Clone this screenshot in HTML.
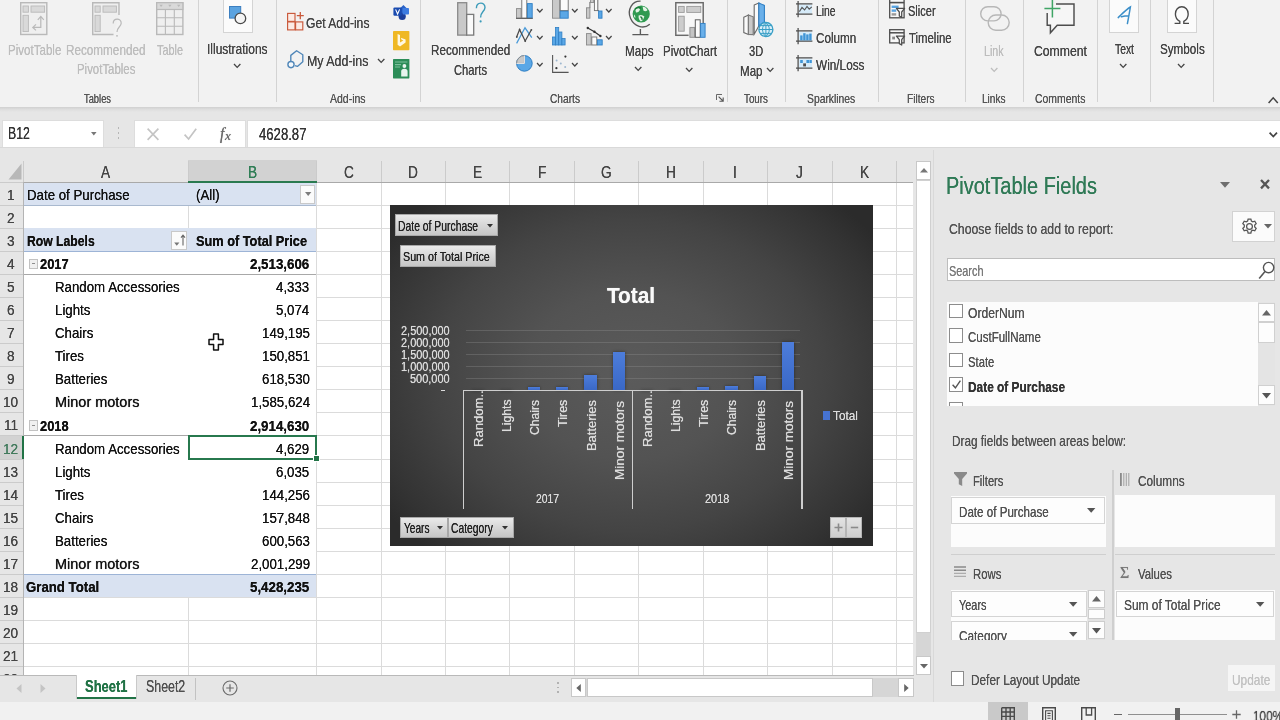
<!DOCTYPE html>
<html><head><meta charset="utf-8"><title>Excel PivotTable</title>
<style>
html,body{margin:0;padding:0;}
body{width:1280px;height:720px;overflow:hidden;position:relative;background:#e6e6e6;font-family:"Liberation Sans",sans-serif;}
#root{position:absolute;left:0;top:0;width:1280px;height:720px;overflow:hidden;will-change:transform;}
#root div,#root svg,#root span.t{position:absolute;}
span.t{white-space:nowrap;transform-origin:0 0;display:block;font-family:"Liberation Sans",sans-serif;}
span.t{text-shadow:0 0 0.7px currentColor;}
span.b{font-weight:bold;}span.i{font-style:italic;}span.s{font-family:"Liberation Serif",serif;}
svg{overflow:visible;}
</style></head><body><div id="root">
<div style="left:0.00px;top:0.00px;width:1280.00px;height:106.80px;background:#f2f2f2;"></div>
<div style="left:0.00px;top:106.80px;width:1280.00px;height:5.70px;background:linear-gradient(#d0d0d0,#dddddd 45%,#e6e6e6);"></div>
<div style="left:2.50px;top:120.60px;width:100.60px;height:26.30px;background:#fff;box-shadow:0 0 0 1px #dddddd;"></div>
<div style="left:134.60px;top:120.60px;width:110.00px;height:26.30px;background:#fff;box-shadow:0 0 0 1px #dddddd;"></div>
<div style="left:247.50px;top:120.60px;width:1033.50px;height:26.30px;background:#fff;box-shadow:0 0 0 1px #dddddd;"></div>
<div style="left:0.00px;top:147.30px;width:1280.00px;height:1.00px;background:#d9d9d9;"></div>
<div style="left:197.90px;top:0.00px;width:1.10px;height:101.70px;background:#d3d3d3;"></div>
<div style="left:275.80px;top:0.00px;width:1.10px;height:101.70px;background:#d3d3d3;"></div>
<div style="left:420.00px;top:0.00px;width:1.10px;height:101.70px;background:#d3d3d3;"></div>
<div style="left:727.00px;top:0.00px;width:1.10px;height:101.70px;background:#d3d3d3;"></div>
<div style="left:785.20px;top:0.00px;width:1.10px;height:101.70px;background:#d3d3d3;"></div>
<div style="left:877.80px;top:0.00px;width:1.10px;height:101.70px;background:#d3d3d3;"></div>
<div style="left:964.90px;top:0.00px;width:1.10px;height:101.70px;background:#d3d3d3;"></div>
<div style="left:1022.90px;top:0.00px;width:1.10px;height:101.70px;background:#d3d3d3;"></div>
<div style="left:1096.50px;top:0.00px;width:1.10px;height:101.70px;background:#d3d3d3;"></div>
<div style="left:1150.00px;top:0.00px;width:1.10px;height:101.70px;background:#d3d3d3;"></div>
<div style="left:1212.80px;top:0.00px;width:1.10px;height:101.70px;background:#d3d3d3;"></div>
<span class="t" style="left:7.60px;top:42.60px;font-size:14.2px;line-height:14.2px;color:#bdbdbd;transform:scaleX(0.8149);">PivotTable</span>
<span class="t" style="left:66.00px;top:42.60px;font-size:14.2px;line-height:14.2px;color:#bdbdbd;transform:scaleX(0.8258);">Recommended</span>
<span class="t" style="left:76.50px;top:62.10px;font-size:14.2px;line-height:14.2px;color:#bdbdbd;transform:scaleX(0.8054);">PivotTables</span>
<span class="t" style="left:157.00px;top:42.60px;font-size:14.2px;line-height:14.2px;color:#bdbdbd;transform:scaleX(0.7661);">Table</span>
<span class="t" style="left:84.00px;top:91.50px;font-size:13.6px;line-height:13.6px;color:#555;transform:scaleX(0.6870);">Tables</span>
<span class="t" style="left:206.70px;top:41.50px;font-size:14.2px;line-height:14.2px;color:#444;transform:scaleX(0.8434);">Illustrations</span>
<svg style="left:234.20px;top:64.10px;" width="6.4" height="3.4" viewBox="0 0 6.4 3.4"><path d="M0 0 L3.2 3.4 L6.4 0" fill="none" stroke="#444" stroke-width="1.3"/></svg>
<span class="t" style="left:306.00px;top:15.90px;font-size:14.2px;line-height:14.2px;color:#444;transform:scaleX(0.8559);">Get Add-ins</span>
<span class="t" style="left:306.50px;top:53.50px;font-size:14.2px;line-height:14.2px;color:#444;transform:scaleX(0.8758);">My Add-ins</span>
<svg style="left:378.40px;top:58.70px;" width="6.4" height="3.4" viewBox="0 0 6.4 3.4"><path d="M0 0 L3.2 3.4 L6.4 0" fill="none" stroke="#444" stroke-width="1.3"/></svg>
<span class="t" style="left:330.00px;top:91.50px;font-size:13.6px;line-height:13.6px;color:#555;transform:scaleX(0.7722);">Add-ins</span>
<span class="t" style="left:430.80px;top:43.10px;font-size:14.2px;line-height:14.2px;color:#444;transform:scaleX(0.8226);">Recommended</span>
<span class="t" style="left:454.00px;top:62.70px;font-size:14.2px;line-height:14.2px;color:#444;transform:scaleX(0.7891);">Charts</span>
<span class="t" style="left:625.00px;top:43.70px;font-size:14.2px;line-height:14.2px;color:#444;transform:scaleX(0.8238);">Maps</span>
<svg style="left:635.30px;top:67.30px;" width="6.4" height="3.4" viewBox="0 0 6.4 3.4"><path d="M0 0 L3.2 3.4 L6.4 0" fill="none" stroke="#444" stroke-width="1.3"/></svg>
<span class="t" style="left:663.00px;top:43.90px;font-size:14.2px;line-height:14.2px;color:#444;transform:scaleX(0.8143);">PivotChart</span>
<svg style="left:686.00px;top:67.80px;" width="6.4" height="3.4" viewBox="0 0 6.4 3.4"><path d="M0 0 L3.2 3.4 L6.4 0" fill="none" stroke="#444" stroke-width="1.3"/></svg>
<span class="t" style="left:550.00px;top:91.50px;font-size:13.6px;line-height:13.6px;color:#555;transform:scaleX(0.7490);">Charts</span>
<span class="t" style="left:749.40px;top:44.30px;font-size:14.2px;line-height:14.2px;color:#444;transform:scaleX(0.7813);">3D</span>
<span class="t" style="left:739.50px;top:63.50px;font-size:14.2px;line-height:14.2px;color:#444;transform:scaleX(0.8147);">Map</span>
<svg style="left:767.00px;top:67.90px;" width="6.4" height="3.4" viewBox="0 0 6.4 3.4"><path d="M0 0 L3.2 3.4 L6.4 0" fill="none" stroke="#444" stroke-width="1.3"/></svg>
<span class="t" style="left:744.00px;top:91.50px;font-size:13.6px;line-height:13.6px;color:#555;transform:scaleX(0.7218);">Tours</span>
<span class="t" style="left:816.00px;top:3.60px;font-size:14.2px;line-height:14.2px;color:#444;transform:scaleX(0.7303);">Line</span>
<span class="t" style="left:816.00px;top:30.60px;font-size:14.2px;line-height:14.2px;color:#444;transform:scaleX(0.8259);">Column</span>
<span class="t" style="left:815.50px;top:57.90px;font-size:14.2px;line-height:14.2px;color:#444;transform:scaleX(0.8310);">Win/Loss</span>
<span class="t" style="left:807.00px;top:91.50px;font-size:13.6px;line-height:13.6px;color:#555;transform:scaleX(0.7605);">Sparklines</span>
<span class="t" style="left:908.00px;top:3.60px;font-size:14.2px;line-height:14.2px;color:#444;transform:scaleX(0.7775);">Slicer</span>
<span class="t" style="left:909.00px;top:30.60px;font-size:14.2px;line-height:14.2px;color:#444;transform:scaleX(0.8021);">Timeline</span>
<span class="t" style="left:907.40px;top:91.50px;font-size:13.6px;line-height:13.6px;color:#555;transform:scaleX(0.7461);">Filters</span>
<span class="t" style="left:984.40px;top:44.30px;font-size:14.2px;line-height:14.2px;color:#bdbdbd;transform:scaleX(0.7502);">Link</span>
<svg style="left:990.80px;top:67.90px;" width="6.4" height="3.4" viewBox="0 0 6.4 3.4"><path d="M0 0 L3.2 3.4 L6.4 0" fill="none" stroke="#bdbdbd" stroke-width="1.3"/></svg>
<span class="t" style="left:982.00px;top:91.50px;font-size:13.6px;line-height:13.6px;color:#555;transform:scaleX(0.7432);">Links</span>
<span class="t" style="left:1034.00px;top:43.70px;font-size:14.2px;line-height:14.2px;color:#444;transform:scaleX(0.8610);">Comment</span>
<span class="t" style="left:1034.50px;top:91.50px;font-size:13.6px;line-height:13.6px;color:#555;transform:scaleX(0.7680);">Comments</span>
<span class="t" style="left:1115.00px;top:41.50px;font-size:14.2px;line-height:14.2px;color:#444;transform:scaleX(0.7292);">Text</span>
<svg style="left:1120.40px;top:64.30px;" width="6.4" height="3.4" viewBox="0 0 6.4 3.4"><path d="M0 0 L3.2 3.4 L6.4 0" fill="none" stroke="#444" stroke-width="1.3"/></svg>
<span class="t" style="left:1159.70px;top:41.50px;font-size:14.2px;line-height:14.2px;color:#444;transform:scaleX(0.8227);">Symbols</span>
<svg style="left:1177.80px;top:64.30px;" width="6.4" height="3.4" viewBox="0 0 6.4 3.4"><path d="M0 0 L3.2 3.4 L6.4 0" fill="none" stroke="#444" stroke-width="1.3"/></svg>
<svg style="left:536.80px;top:9.00px;" width="5.6" height="3.0" viewBox="0 0 5.6 3.0"><path d="M0 0 L2.8 3.0 L5.6 0" fill="none" stroke="#444" stroke-width="1.2"/></svg>
<svg style="left:536.80px;top:35.80px;" width="5.6" height="3.0" viewBox="0 0 5.6 3.0"><path d="M0 0 L2.8 3.0 L5.6 0" fill="none" stroke="#444" stroke-width="1.2"/></svg>
<svg style="left:536.80px;top:62.90px;" width="5.6" height="3.0" viewBox="0 0 5.6 3.0"><path d="M0 0 L2.8 3.0 L5.6 0" fill="none" stroke="#444" stroke-width="1.2"/></svg>
<svg style="left:571.50px;top:9.00px;" width="5.6" height="3.0" viewBox="0 0 5.6 3.0"><path d="M0 0 L2.8 3.0 L5.6 0" fill="none" stroke="#444" stroke-width="1.2"/></svg>
<svg style="left:571.50px;top:35.80px;" width="5.6" height="3.0" viewBox="0 0 5.6 3.0"><path d="M0 0 L2.8 3.0 L5.6 0" fill="none" stroke="#444" stroke-width="1.2"/></svg>
<svg style="left:571.50px;top:62.90px;" width="5.6" height="3.0" viewBox="0 0 5.6 3.0"><path d="M0 0 L2.8 3.0 L5.6 0" fill="none" stroke="#444" stroke-width="1.2"/></svg>
<svg style="left:606.40px;top:9.00px;" width="5.6" height="3.0" viewBox="0 0 5.6 3.0"><path d="M0 0 L2.8 3.0 L5.6 0" fill="none" stroke="#444" stroke-width="1.2"/></svg>
<svg style="left:606.40px;top:35.80px;" width="5.6" height="3.0" viewBox="0 0 5.6 3.0"><path d="M0 0 L2.8 3.0 L5.6 0" fill="none" stroke="#444" stroke-width="1.2"/></svg>
<svg style="left:1268.00px;top:96.50px;" width="10.4" height="6.4" viewBox="0 0 10.4 6.4"><path d="M0.6 6 L5.2 0.8 L9.8 6" fill="none" stroke="#444" stroke-width="1.5"/></svg>
<svg style="left:716.00px;top:93.60px;" width="8" height="8.4" viewBox="0 0 8 8.4"><path d="M0.5 6 V0.5 H6" fill="none" stroke="#666" stroke-width="1"/><path d="M2.6 2.6 L7 7 M7.2 3.4 V7.2 H3.4" fill="none" stroke="#555" stroke-width="1.1"/></svg>
<span class="t" style="left:7.50px;top:126.00px;font-size:15.8px;line-height:15.8px;color:#333;transform:scaleX(0.7787);">B12</span>
<svg style="left:91.40px;top:132.00px;" width="5.6" height="3.6" viewBox="0 0 5.6 3.6"><path d="M0 0 L5.6 0 L2.8 3.4 Z" fill="#777"/></svg>
<div style="left:117.50px;top:127.10px;width:1.80px;height:1.80px;background:#b6b6b6;"></div>
<div style="left:117.50px;top:132.10px;width:1.80px;height:1.80px;background:#b6b6b6;"></div>
<div style="left:117.50px;top:137.10px;width:1.80px;height:1.80px;background:#b6b6b6;"></div>
<svg style="left:147.00px;top:127.50px;" width="12" height="12.5" viewBox="0 0 12 12.5"><path d="M0.6 0.6 L11.4 11.9 M11.4 0.6 L0.6 11.9" stroke="#c4c4c4" stroke-width="1.6"/></svg>
<svg style="left:183.70px;top:128.00px;" width="13" height="12" viewBox="0 0 13 12"><path d="M0.6 6.6 L4.6 11 L12.2 0.8" fill="none" stroke="#c4c4c4" stroke-width="1.7"/></svg>
<span class="t s i" style="left:219.50px;top:125.30px;font-size:17px;line-height:17px;color:#6a6a6a;transform:scaleX(0.9084);">f</span>
<span class="t s i" style="left:225.40px;top:129.55px;font-size:12.5px;line-height:12.5px;color:#6a6a6a;transform:scaleX(1.0435);">x</span>
<span class="t" style="left:258.80px;top:126.70px;font-size:15.6px;line-height:15.6px;color:#333;transform:scaleX(0.8423);">4628.87</span>
<svg style="left:1268.50px;top:131.60px;" width="8.6" height="5.4" viewBox="0 0 8.6 5.4"><path d="M0.6 0.6 L4.3 4.6 L8 0.6" fill="none" stroke="#444" stroke-width="1.7"/></svg>
<svg style="left:20.40px;top:2.20px;" width="27.5" height="33.2" viewBox="0 0 27.5 33.2"><rect x="0.7" y="0.7" width="26.1" height="31.8" fill="#efefef" stroke="#b9b9b9" stroke-width="1.4"/>
<rect x="3" y="4" width="5.4" height="6.2" fill="#d9d9d9" stroke="#b9b9b9" stroke-width="0.9"/>
<rect x="11" y="4" width="13.6" height="6.2" fill="#d9d9d9" stroke="#b9b9b9" stroke-width="0.9"/>
<rect x="3" y="13.3" width="5.4" height="16.3" fill="#d9d9d9" stroke="#b9b9b9" stroke-width="0.9"/>
<path d="M13 25.4 H20.8 V14.6 M17.8 17.8 L20.8 14.4 L23.8 17.8 M16 22.4 L12.8 25.4 L16 28.4" fill="none" stroke="#b9b9b9" stroke-width="1.2"/></svg>
<svg style="left:92.40px;top:2.20px;" width="31" height="36" viewBox="0 0 31 36"><path d="M27 13 V0.7 H0.7 V32.5 H21.5" fill="#efefef" stroke="#b9b9b9" stroke-width="1.4"/>
<rect x="3" y="4" width="5.2" height="6.2" fill="#d9d9d9" stroke="#b9b9b9" stroke-width="0.9"/>
<rect x="11" y="4" width="13.4" height="6.2" fill="#d9d9d9" stroke="#b9b9b9" stroke-width="0.9"/>
<rect x="3" y="13.3" width="5.2" height="16.3" fill="#d9d9d9" stroke="#b9b9b9" stroke-width="0.9"/>
<path d="M21.2 21.4 C21.2 15.6 29.4 15.8 29.2 21.2 C29 25 25 25.2 25 30" fill="none" stroke="#b9b9b9" stroke-width="1.2"/><circle cx="25" cy="33.8" r="0.9" fill="#b9b9b9"/></svg>
<svg style="left:156.20px;top:2.20px;" width="27.6" height="33.2" viewBox="0 0 27.6 33.2"><rect x="0.7" y="0.7" width="26.2" height="31.8" fill="#efefef" stroke="#b9b9b9" stroke-width="1.4"/>
<rect x="0.7" y="0.7" width="26.2" height="6.8" fill="#d9d9d9" stroke="#b9b9b9" stroke-width="1.2"/>
<path d="M9.4 7.5 V32.5 M18.3 7.5 V32.5 M0.7 15.8 H26.9 M0.7 24.2 H26.9" stroke="#b9b9b9" stroke-width="1.1"/>
<path d="M3.4 2.8 H6.8 L5.1 5 Z M12.2 2.8 H15.6 L13.9 5 Z M21 2.8 H24.4 L22.7 5 Z" fill="#b9b9b9"/></svg>
<div style="left:222.70px;top:-2.00px;width:30.10px;height:35.00px;background:#fbfbfb;box-shadow:inset 0 0 0 1px #d4d4d4;"></div>
<svg style="left:229.00px;top:6.00px;" width="18" height="19" viewBox="0 0 18 19"><rect x="0.5" y="0.5" width="11.2" height="11.6" fill="#5ba3e0" stroke="#3c7fc0" stroke-width="1"/>
<circle cx="11.4" cy="12.4" r="5.3" fill="#f4f4f4" stroke="#4a4a4a" stroke-width="1.3"/></svg>
<svg style="left:287.00px;top:12.20px;" width="16.6" height="19" viewBox="0 0 16.6 19"><g fill="#fcebe5" stroke="#c9583a" stroke-width="1.15"><rect x="0.6" y="1.4" width="7.4" height="8"/><rect x="0.6" y="9.9" width="7.4" height="8"/><rect x="8.6" y="9.9" width="7.2" height="8"/></g>
<path d="M13.3 0 V7.2 M9.8 3.6 H16.8" stroke="#c9583a" stroke-width="1.3" fill="none"/></svg>
<svg style="left:287.00px;top:50.00px;" width="17" height="19" viewBox="0 0 17 19"><path d="M3.8 11.2 V5.4 L9.6 0.8 L15.8 4.8 V11.8 L10.4 16.4 L8 15.6" fill="none" stroke="#4f86b8" stroke-width="1.35" stroke-linejoin="round"/>
<circle cx="4" cy="14.6" r="3.1" fill="#f4f8fc" stroke="#4f86b8" stroke-width="1.35"/></svg>
<svg style="left:393.40px;top:3.60px;" width="16.4" height="16.8" viewBox="0 0 16.4 16.8"><path d="M10.4 1 L15.6 6 L10.4 11 L5.2 6 Z" fill="#2b63c7"/><circle cx="9.2" cy="12.4" r="3.6" fill="#1d3f9a"/><rect x="9.6" y="4" width="6.4" height="6.6" rx="0.8" fill="#3d7be0"/>
<rect x="0.4" y="3.4" width="8.4" height="8.4" rx="1.2" fill="#1a4bb0"/><path d="M2.6 5.4 L4.6 10 L6.6 5.4" fill="none" stroke="#fff" stroke-width="1.1"/></svg>
<svg style="left:393.20px;top:31.00px;" width="16.4" height="19.2" viewBox="0 0 16.4 19.2"><rect x="0" y="0" width="16.4" height="19.2" rx="0.8" fill="#efb824"/>
<path d="M4.6 3 L7 3.9 V11.4 L10.4 9.6 L8.6 8.8 L7.8 6.8 L12.6 8.6 V11.4 L7 15.4 L4.6 13.8 Z" fill="#fff8e0"/></svg>
<svg style="left:393.40px;top:59.40px;" width="16.4" height="19.4" viewBox="0 0 16.4 19.4"><rect x="0" y="0" width="16.4" height="19.4" rx="0.6" fill="#2c8d58"/>
<path d="M2 3 H14.4 M2 5.6 H8 M2 8 H7" stroke="#7cc29c" stroke-width="1.1"/>
<circle cx="11.4" cy="7" r="1.9" fill="#e8f5ee"/><path d="M8.2 17.4 V12.4 Q8.2 9.8 11.4 9.8 Q14.6 9.8 14.6 12.4 V17.4 Z" fill="#e8f5ee"/></svg>
<svg style="left:456.60px;top:2.00px;" width="29" height="34" viewBox="0 0 29 34"><rect x="0.7" y="0.7" width="9" height="32.4" fill="#c9c9c9" stroke="#8a8a8a" stroke-width="1.3"/>
<rect x="9.7" y="12.4" width="7" height="20.7" fill="#fafafa" stroke="#7a7a7a" stroke-width="1.3"/>
<path d="M19.4 6.2 C19.4 -0.6 28.2 -0.2 28 5.4 C27.8 9.6 23.6 9.8 23.6 15.4" fill="none" stroke="#3b9bb9" stroke-width="1.4"/><circle cx="23.6" cy="19.4" r="1.1" fill="#3b9bb9"/></svg>
<svg style="left:516.40px;top:0.00px;" width="17" height="19" viewBox="0 0 17 19"><rect x="0.5" y="8.6" width="4.6" height="9.6" fill="#c9c9c9" stroke="#8a8a8a" stroke-width="0.9"/>
<rect x="5.8" y="-1" width="5" height="19.2" fill="#fbfbfb" stroke="#6f6f6f" stroke-width="0.9"/>
<rect x="11.4" y="3.6" width="4.8" height="14.6" fill="#5aa7e6" stroke="#2f7fc4" stroke-width="0.9"/>
<path d="M0 18.3 H16.8" stroke="#555" stroke-width="1"/></svg>
<svg style="left:551.50px;top:0.00px;" width="17" height="19" viewBox="0 0 17 19"><rect x="0.5" y="-1" width="7.2" height="19.2" fill="#c9c9c9" stroke="#8a8a8a" stroke-width="0.9"/>
<rect x="8.2" y="-1" width="8" height="11.6" fill="#fbfbfb" stroke="#6f6f6f" stroke-width="0.9"/>
<rect x="8.2" y="11.2" width="8" height="7" fill="#5aa7e6" stroke="#2f7fc4" stroke-width="0.9"/></svg>
<svg style="left:586.30px;top:0.00px;" width="17" height="19" viewBox="0 0 17 19"><rect x="0.5" y="7.8" width="3.4" height="10.4" fill="#c9c9c9" stroke="#8a8a8a" stroke-width="0.9"/>
<path d="M3.9 7.8 V2 H8 V-1 M8 -1 H11.6 V10.6 H13" fill="none" stroke="#6f6f6f" stroke-width="1"/>
<rect x="4.4" y="-1" width="3.4" height="3.4" fill="#c9c9c9" stroke="#8a8a8a" stroke-width="0.8"/>
<rect x="8.4" y="-1" width="3.4" height="11.6" fill="#fbfbfb" stroke="#6f6f6f" stroke-width="0.9"/>
<rect x="12.6" y="11" width="3.4" height="7.2" fill="#5aa7e6" stroke="#2f7fc4" stroke-width="0.9"/></svg>
<svg style="left:516.40px;top:27.40px;" width="17" height="17" viewBox="0 0 17 17"><path d="M0.6 16.4 L9 0.8 L15.8 10.6" fill="none" stroke="#4a9ad8" stroke-width="1.25"/>
<path d="M0.6 10 L3.6 2.6 L9.2 14 L15.4 2.8" fill="none" stroke="#4a4a4a" stroke-width="1.25"/>
<g fill="#4a4a4a"><circle cx="0.8" cy="10" r="0.9"/><circle cx="3.6" cy="2.6" r="0.9"/><circle cx="9.2" cy="14" r="0.9"/><circle cx="15.4" cy="2.8" r="0.9"/></g></svg>
<svg style="left:552.00px;top:27.40px;" width="14" height="18.6" viewBox="0 0 14 18.6"><g fill="#5aa7e6" stroke="#2f7fc4" stroke-width="0.8"><rect x="0.5" y="10" width="3" height="8"/><rect x="3.5" y="0.5" width="3.2" height="17.5"/><rect x="6.7" y="5" width="3.2" height="13"/><rect x="9.9" y="11.6" width="3.2" height="6.4"/></g></svg>
<svg style="left:586.30px;top:27.40px;" width="17" height="18.6" viewBox="0 0 17 18.6"><rect x="0.5" y="6.6" width="4.6" height="11.4" fill="#c9c9c9" stroke="#8a8a8a" stroke-width="0.9"/>
<rect x="5.8" y="10" width="5" height="8" fill="#fbfbfb" stroke="#6f6f6f" stroke-width="0.9"/>
<rect x="11.4" y="12.8" width="4.8" height="5.2" fill="#5aa7e6" stroke="#2f7fc4" stroke-width="0.9"/>
<path d="M1.8 1 L8.4 4.8 L14.4 9" stroke="#333" stroke-width="1.2" fill="none"/><g fill="#333"><circle cx="1.8" cy="1" r="1.2"/><circle cx="8.4" cy="4.8" r="1.2"/><circle cx="14.4" cy="9" r="1.2"/></g></svg>
<svg style="left:516.00px;top:54.60px;" width="17" height="17" viewBox="0 0 17 17"><circle cx="8.4" cy="8.4" r="7.8" fill="#5aa7e6" stroke="#2f7fc4" stroke-width="1"/>
<path d="M8.4 8.4 V0.6 A7.8 7.8 0 0 0 0.6 8.4 Z" fill="#c9c9c9" stroke="#8a8a8a" stroke-width="0.9"/>
<path d="M8.4 0.6 V8.4 H0.6" fill="none" stroke="#f4f4f4" stroke-width="0.9"/></svg>
<svg style="left:551.50px;top:54.80px;" width="17" height="18.4" viewBox="0 0 17 18.4"><path d="M0.6 0 V17.4 H16.6" fill="none" stroke="#555" stroke-width="1.1"/>
<g fill="#333"><circle cx="13.4" cy="1.6" r="1.1"/><circle cx="4.4" cy="13.2" r="1.1"/></g>
<g fill="#9db7cf"><circle cx="4.6" cy="5.4" r="1"/><circle cx="8.8" cy="8.4" r="1"/><circle cx="13.2" cy="12" r="1"/></g></svg>
<svg style="left:626.00px;top:0.00px;" width="26" height="36" viewBox="0 0 26 36"><circle cx="15.2" cy="14" r="8.6" fill="#2f9a50"/>
<path d="M10.6 8.6 Q13 7 14 9.4 Q13 12.6 10 12.4 Q8.6 10.4 10.6 8.6 Z M16.6 6.6 Q20 7 21.6 10 Q19.6 12.4 17.4 10.6 Z M12.6 15.4 Q16 14 18.4 16.4 Q17.6 20 15 21.4 Q12.2 19.4 12.6 15.4 Z M8 14.6 Q9.6 15.6 9.4 18 Q7.6 17 8 14.6 Z" fill="#e4f4e6"/>
<path d="M9 9 Q12 6.4 15 8.2 M14.4 16.6 Q16.4 17.4 16 19.8" fill="none" stroke="#1d7a3a" stroke-width="1.4"/>
<path d="M14.6 1.2 C6.4 0.8 0.6 9.4 4.6 18.6 C8 26.2 17.4 29.8 23.8 24.2" fill="none" stroke="#5a5a5a" stroke-width="1.35"/>
<path d="M14.4 29 V34.6 M6.4 34.6 H22.4" stroke="#5a5a5a" stroke-width="1.35"/></svg>
<svg style="left:675.40px;top:2.00px;" width="31" height="36" viewBox="0 0 31 36"><rect x="0.8" y="0.7" width="27.4" height="32.6" fill="#f7f7f7" stroke="#6a6a6a" stroke-width="1.45"/>
<rect x="3.6" y="4.4" width="5.6" height="6" fill="#cdcdcd" stroke="#9a9a9a" stroke-width="0.9"/>
<rect x="11.8" y="4.4" width="14" height="6" fill="#cdcdcd" stroke="#9a9a9a" stroke-width="0.9"/>
<rect x="3.6" y="14.2" width="5.6" height="15" fill="#cdcdcd" stroke="#9a9a9a" stroke-width="0.9"/>
<rect x="13.6" y="24" width="7" height="12" fill="#f1f1f1"/>
<rect x="14.9" y="25.6" width="4.8" height="9.7" fill="#c4c4c4" stroke="#8a8a8a" stroke-width="0.9"/>
<rect x="20.3" y="17.8" width="4.9" height="17.5" fill="#fbfbfb" stroke="#5e5e5e" stroke-width="1"/>
<rect x="25.6" y="21.4" width="4.5" height="13.9" fill="#6ab0ea" stroke="#2f7fc4" stroke-width="0.9"/></svg>
<svg style="left:742.60px;top:2.00px;" width="31" height="36" viewBox="0 0 31 36"><path d="M0.8 15.2 L5.4 13 V32.4 L0.8 30.6 Z" fill="#fafafa" stroke="#6a6a6a" stroke-width="1.1"/>
<path d="M5.4 13 L10.2 14.8 V32.6 L5.4 32.4 Z" fill="#c9c9c9" stroke="#7a7a7a" stroke-width="1.1"/>
<path d="M11.2 3 L15.8 1 V24 L11.2 32.2 Z" fill="#fafafa" stroke="#6a6a6a" stroke-width="1.1"/>
<path d="M15.8 1 L21.4 3.4 V20 L15.8 24 Z" fill="#6ab0ea" stroke="#2f7fc4" stroke-width="1.1"/>
<circle cx="22.9" cy="27.5" r="7" fill="#d9eef8" stroke="#3a9fc6" stroke-width="1.3"/>
<path d="M15.9 27.5 H29.9 M17 23.6 H28.8 M17 31.4 H28.8 M22.9 20.5 V34.5 M22.9 20.5 C18.4 24 18.4 31 22.9 34.5 M22.9 20.5 C27.4 24 27.4 31 22.9 34.5" fill="none" stroke="#3a9fc6" stroke-width="1"/></svg>
<svg style="left:796.40px;top:1.20px;" width="17" height="17" viewBox="0 0 17 17"><rect x="3" y="3.6" width="13" height="9" fill="#d6ebf9"/>
<path d="M0 2.9 H16.4 M0 13.2 H16.4 M2.1 0 V16.2" stroke="#4d4d4d" stroke-width="1.25" fill="none"/><path d="M3.4 10.6 L6 6.4 L8.6 9 L11 5.4 L13.2 8.2 L15.8 5.8" fill="none" stroke="#555" stroke-width="1.1"/></svg>
<svg style="left:796.40px;top:28.40px;" width="17" height="17" viewBox="0 0 17 17"><rect x="3" y="3.6" width="13" height="9" fill="#d6ebf9"/>
<path d="M0 2.9 H16.4 M0 13.2 H16.4 M2.1 0 V16.2" stroke="#4d4d4d" stroke-width="1.25" fill="none"/><g fill="#3f95d6"><rect x="4.2" y="7.4" width="2.4" height="5"/><rect x="7.2" y="5.2" width="2.4" height="7.2"/><rect x="10.2" y="6.4" width="2.4" height="6"/><rect x="13.2" y="5.6" width="2.4" height="6.8"/></g></svg>
<svg style="left:796.40px;top:55.40px;" width="17" height="17" viewBox="0 0 17 17"><rect x="3" y="3.6" width="13" height="9" fill="#d6ebf9"/>
<path d="M0 2.9 H16.4 M0 13.2 H16.4 M2.1 0 V16.2" stroke="#4d4d4d" stroke-width="1.25" fill="none"/><g fill="#3f95d6"><rect x="4.2" y="5" width="2.6" height="3"/><rect x="10.4" y="5" width="2.6" height="3"/><rect x="13.4" y="5" width="2.4" height="3"/></g><g fill="#4d4d4d"><rect x="7.2" y="8.4" width="2.8" height="3"/></g></svg>
<svg style="left:889.20px;top:-1.00px;" width="16" height="20" viewBox="0 0 16 20"><rect x="0.7" y="0" width="14.4" height="18.8" fill="#f8f8f8" stroke="#4d4d4d" stroke-width="1.3"/>
<path d="M0.7 3.6 H15.1" stroke="#4d4d4d" stroke-width="1.6"/>
<rect x="2.6" y="6.6" width="7" height="2.4" fill="#58a4e2"/><rect x="2.6" y="10.4" width="4.6" height="2.4" fill="#58a4e2"/><rect x="2.6" y="14.2" width="4.6" height="2.4" fill="#9a9a9a"/>
<path d="M7.4 9.4 H15.6 L12.7 13 V18.4 L10.3 17 V13 Z" fill="#f8f8f8" stroke="#4d4d4d" stroke-width="1.25" stroke-linejoin="round"/></svg>
<svg style="left:889.20px;top:29.40px;" width="16" height="17" viewBox="0 0 16 17"><rect x="0.7" y="0.7" width="14.4" height="13.2" fill="#f8f8f8" stroke="#4d4d4d" stroke-width="1.3"/>
<path d="M0.7 3.8 H15.1" stroke="#4d4d4d" stroke-width="1.5"/>
<rect x="3.2" y="7.6" width="2.8" height="2.8" fill="#8a8a8a"/>
<path d="M7.4 7 H15.6 L12.7 10.6 V16 L10.3 14.6 V10.6 Z" fill="#f8f8f8" stroke="#4d4d4d" stroke-width="1.25" stroke-linejoin="round"/></svg>
<svg style="left:980.00px;top:6.40px;" width="30" height="25" viewBox="0 0 30 25"><rect x="0.7" y="0.7" width="20.4" height="14.2" rx="7.1" fill="none" stroke="#b7b7b7" stroke-width="1.4"/>
<rect x="8.2" y="9" width="21" height="15.2" rx="7.6" fill="none" stroke="#b7b7b7" stroke-width="1.4"/></svg>
<svg style="left:1043.60px;top:0.00px;" width="32" height="34.5" viewBox="0 0 32 34.5"><path d="M12 4 H30 V25.2 H13.2 L6.4 32.8 V25.2 H3.2 V13" fill="#f6f6f6" stroke="#4d4d4d" stroke-width="1.45" stroke-linejoin="miter"/>
<path d="M8.4 -1 V17.6 M0.4 8.4 H16.4" stroke="#3fa565" stroke-width="1.5" fill="none"/></svg>
<div style="left:1109.20px;top:-2.00px;width:30.10px;height:35.40px;background:#fbfbfb;box-shadow:inset 0 0 0 1px #d4d4d4;"></div>
<svg style="left:1117.00px;top:6.00px;" width="16" height="19" viewBox="0 0 16 19"><path d="M1.2 11.6 C4.6 8.4 9 3.6 13.4 1 C12.6 6 11.4 12 10.4 17.6 M4.4 10.8 C7 10 9.6 9.8 12 9.8" fill="none" stroke="#3c8fc9" stroke-width="1.5" stroke-linecap="round"/></svg>
<div style="left:1167.20px;top:-2.00px;width:30.00px;height:35.40px;background:#fbfbfb;box-shadow:inset 0 0 0 1px #d4d4d4;"></div>
<svg style="left:1174.20px;top:6.40px;" width="16" height="18.4" viewBox="0 0 16 18.4"><path d="M0.6 17.4 H5.8 V15.4 C2.6 13.6 1.4 10.8 1.4 8 C1.4 3.6 4.2 0.8 7.8 0.8 C11.4 0.8 14.2 3.6 14.2 8 C14.2 10.8 13 13.6 9.8 15.4 V17.4 H15" fill="none" stroke="#4a4a4a" stroke-width="1.35"/></svg>
<div style="left:23.40px;top:182.30px;width:890.10px;height:492.70px;background:#fff;"></div>
<div style="left:23.40px;top:204.86px;width:890.10px;height:1.00px;background:#dbdbdb;"></div>
<div style="left:23.40px;top:227.92px;width:890.10px;height:1.00px;background:#dbdbdb;"></div>
<div style="left:23.40px;top:250.98px;width:890.10px;height:1.00px;background:#dbdbdb;"></div>
<div style="left:23.40px;top:274.04px;width:890.10px;height:1.00px;background:#dbdbdb;"></div>
<div style="left:23.40px;top:297.10px;width:890.10px;height:1.00px;background:#dbdbdb;"></div>
<div style="left:23.40px;top:320.16px;width:890.10px;height:1.00px;background:#dbdbdb;"></div>
<div style="left:23.40px;top:343.22px;width:890.10px;height:1.00px;background:#dbdbdb;"></div>
<div style="left:23.40px;top:366.28px;width:890.10px;height:1.00px;background:#dbdbdb;"></div>
<div style="left:23.40px;top:389.34px;width:890.10px;height:1.00px;background:#dbdbdb;"></div>
<div style="left:23.40px;top:412.40px;width:890.10px;height:1.00px;background:#dbdbdb;"></div>
<div style="left:23.40px;top:435.46px;width:890.10px;height:1.00px;background:#dbdbdb;"></div>
<div style="left:23.40px;top:458.52px;width:890.10px;height:1.00px;background:#dbdbdb;"></div>
<div style="left:23.40px;top:481.58px;width:890.10px;height:1.00px;background:#dbdbdb;"></div>
<div style="left:23.40px;top:504.64px;width:890.10px;height:1.00px;background:#dbdbdb;"></div>
<div style="left:23.40px;top:527.70px;width:890.10px;height:1.00px;background:#dbdbdb;"></div>
<div style="left:23.40px;top:550.76px;width:890.10px;height:1.00px;background:#dbdbdb;"></div>
<div style="left:23.40px;top:573.82px;width:890.10px;height:1.00px;background:#dbdbdb;"></div>
<div style="left:23.40px;top:596.88px;width:890.10px;height:1.00px;background:#dbdbdb;"></div>
<div style="left:23.40px;top:619.94px;width:890.10px;height:1.00px;background:#dbdbdb;"></div>
<div style="left:23.40px;top:643.00px;width:890.10px;height:1.00px;background:#dbdbdb;"></div>
<div style="left:23.40px;top:666.06px;width:890.10px;height:1.00px;background:#dbdbdb;"></div>
<div style="left:187.80px;top:182.30px;width:1.00px;height:492.70px;background:#dbdbdb;"></div>
<div style="left:316.20px;top:182.30px;width:1.00px;height:492.70px;background:#dbdbdb;"></div>
<div style="left:380.60px;top:182.30px;width:1.00px;height:492.70px;background:#dbdbdb;"></div>
<div style="left:445.00px;top:182.30px;width:1.00px;height:492.70px;background:#dbdbdb;"></div>
<div style="left:509.40px;top:182.30px;width:1.00px;height:492.70px;background:#dbdbdb;"></div>
<div style="left:573.80px;top:182.30px;width:1.00px;height:492.70px;background:#dbdbdb;"></div>
<div style="left:638.20px;top:182.30px;width:1.00px;height:492.70px;background:#dbdbdb;"></div>
<div style="left:702.70px;top:182.30px;width:1.00px;height:492.70px;background:#dbdbdb;"></div>
<div style="left:767.20px;top:182.30px;width:1.00px;height:492.70px;background:#dbdbdb;"></div>
<div style="left:831.80px;top:182.30px;width:1.00px;height:492.70px;background:#dbdbdb;"></div>
<div style="left:895.90px;top:182.30px;width:1.00px;height:492.70px;background:#dbdbdb;"></div>
<div style="left:23.90px;top:228.42px;width:292.30px;height:368.46px;background:#fff;"></div>
<div style="left:23.90px;top:182.80px;width:292.30px;height:22.06px;background:#d9e2f1;"></div>
<div style="left:23.90px;top:228.42px;width:292.30px;height:22.56px;background:#d9e2f1;"></div>
<div style="left:23.90px;top:574.32px;width:292.30px;height:22.56px;background:#d9e2f1;"></div>
<div style="left:23.90px;top:182.10px;width:292.30px;height:1.00px;background:#a9b9cf;"></div>
<div style="left:23.90px;top:204.76px;width:292.30px;height:1.00px;background:#a9b9cf;"></div>
<div style="left:23.90px;top:250.78px;width:292.30px;height:1.20px;background:#9db4d6;"></div>
<div style="left:23.90px;top:273.84px;width:292.30px;height:1.20px;background:#a8a8a8;"></div>
<div style="left:23.90px;top:435.26px;width:292.30px;height:1.20px;background:#a8a8a8;"></div>
<div style="left:23.90px;top:573.62px;width:292.30px;height:1.20px;background:#9db4d6;"></div>
<div style="left:188.30px;top:160.00px;width:128.40px;height:22.50px;background:#d2d2d2;"></div>
<div style="left:188.30px;top:180.50px;width:128.40px;height:2.00px;background:#2a7a50;"></div>
<div style="left:22.90px;top:160.50px;width:1.00px;height:21.50px;background:#cbcbcb;"></div>
<div style="left:187.80px;top:160.50px;width:1.00px;height:21.50px;background:#cbcbcb;"></div>
<div style="left:316.20px;top:160.50px;width:1.00px;height:21.50px;background:#cbcbcb;"></div>
<div style="left:380.60px;top:160.50px;width:1.00px;height:21.50px;background:#cbcbcb;"></div>
<div style="left:445.00px;top:160.50px;width:1.00px;height:21.50px;background:#cbcbcb;"></div>
<div style="left:509.40px;top:160.50px;width:1.00px;height:21.50px;background:#cbcbcb;"></div>
<div style="left:573.80px;top:160.50px;width:1.00px;height:21.50px;background:#cbcbcb;"></div>
<div style="left:638.20px;top:160.50px;width:1.00px;height:21.50px;background:#cbcbcb;"></div>
<div style="left:702.70px;top:160.50px;width:1.00px;height:21.50px;background:#cbcbcb;"></div>
<div style="left:767.20px;top:160.50px;width:1.00px;height:21.50px;background:#cbcbcb;"></div>
<div style="left:831.80px;top:160.50px;width:1.00px;height:21.50px;background:#cbcbcb;"></div>
<div style="left:895.90px;top:160.50px;width:1.00px;height:21.50px;background:#cbcbcb;"></div>
<div style="left:23.40px;top:181.60px;width:890.10px;height:1.00px;background:#a9a9a9;"></div>
<div style="left:188.30px;top:180.50px;width:128.40px;height:2.00px;background:#2a7a50;"></div>
<svg style="left:8.00px;top:163.00px;" width="14" height="17" viewBox="0 0 14 17"><path d="M13.5 0.5 L13.5 16.5 L0.5 16.5 Z" fill="#b8b8b8"/></svg>
<div style="left:0.00px;top:435.96px;width:23.40px;height:23.06px;background:#d2d2d2;"></div>
<div style="left:0.00px;top:181.80px;width:23.40px;height:1.00px;background:#cbcbcb;"></div>
<div style="left:0.00px;top:204.86px;width:23.40px;height:1.00px;background:#cbcbcb;"></div>
<div style="left:0.00px;top:227.92px;width:23.40px;height:1.00px;background:#cbcbcb;"></div>
<div style="left:0.00px;top:250.98px;width:23.40px;height:1.00px;background:#cbcbcb;"></div>
<div style="left:0.00px;top:274.04px;width:23.40px;height:1.00px;background:#cbcbcb;"></div>
<div style="left:0.00px;top:297.10px;width:23.40px;height:1.00px;background:#cbcbcb;"></div>
<div style="left:0.00px;top:320.16px;width:23.40px;height:1.00px;background:#cbcbcb;"></div>
<div style="left:0.00px;top:343.22px;width:23.40px;height:1.00px;background:#cbcbcb;"></div>
<div style="left:0.00px;top:366.28px;width:23.40px;height:1.00px;background:#cbcbcb;"></div>
<div style="left:0.00px;top:389.34px;width:23.40px;height:1.00px;background:#cbcbcb;"></div>
<div style="left:0.00px;top:412.40px;width:23.40px;height:1.00px;background:#cbcbcb;"></div>
<div style="left:0.00px;top:435.46px;width:23.40px;height:1.00px;background:#cbcbcb;"></div>
<div style="left:0.00px;top:458.52px;width:23.40px;height:1.00px;background:#cbcbcb;"></div>
<div style="left:0.00px;top:481.58px;width:23.40px;height:1.00px;background:#cbcbcb;"></div>
<div style="left:0.00px;top:504.64px;width:23.40px;height:1.00px;background:#cbcbcb;"></div>
<div style="left:0.00px;top:527.70px;width:23.40px;height:1.00px;background:#cbcbcb;"></div>
<div style="left:0.00px;top:550.76px;width:23.40px;height:1.00px;background:#cbcbcb;"></div>
<div style="left:0.00px;top:573.82px;width:23.40px;height:1.00px;background:#cbcbcb;"></div>
<div style="left:0.00px;top:596.88px;width:23.40px;height:1.00px;background:#cbcbcb;"></div>
<div style="left:0.00px;top:619.94px;width:23.40px;height:1.00px;background:#cbcbcb;"></div>
<div style="left:0.00px;top:643.00px;width:23.40px;height:1.00px;background:#cbcbcb;"></div>
<div style="left:0.00px;top:666.06px;width:23.40px;height:1.00px;background:#cbcbcb;"></div>
<div style="left:22.90px;top:182.30px;width:1.00px;height:492.70px;background:#b4b4b4;"></div>
<div style="left:21.60px;top:435.96px;width:2.30px;height:23.06px;background:#217346;"></div>
<span class="t" style="left:101.41px;top:164.05px;font-size:16.5px;line-height:16.5px;color:#444;transform:scaleX(0.8300);">A</span>
<span class="t" style="left:247.85px;top:164.05px;font-size:16.5px;line-height:16.5px;color:#2f7d55;transform:scaleX(0.8300);">B</span>
<span class="t" style="left:344.07px;top:164.05px;font-size:16.5px;line-height:16.5px;color:#444;transform:scaleX(0.8300);">C</span>
<span class="t" style="left:408.37px;top:164.05px;font-size:16.5px;line-height:16.5px;color:#444;transform:scaleX(0.8300);">D</span>
<span class="t" style="left:473.15px;top:164.05px;font-size:16.5px;line-height:16.5px;color:#444;transform:scaleX(0.8300);">E</span>
<span class="t" style="left:537.92px;top:164.05px;font-size:16.5px;line-height:16.5px;color:#444;transform:scaleX(0.8300);">F</span>
<span class="t" style="left:601.16px;top:164.05px;font-size:16.5px;line-height:16.5px;color:#444;transform:scaleX(0.8300);">G</span>
<span class="t" style="left:666.07px;top:164.05px;font-size:16.5px;line-height:16.5px;color:#444;transform:scaleX(0.8300);">H</span>
<span class="t" style="left:733.48px;top:164.05px;font-size:16.5px;line-height:16.5px;color:#444;transform:scaleX(0.8300);">I</span>
<span class="t" style="left:796.38px;top:164.05px;font-size:16.5px;line-height:16.5px;color:#444;transform:scaleX(0.8300);">J</span>
<span class="t" style="left:859.85px;top:164.05px;font-size:16.5px;line-height:16.5px;color:#444;transform:scaleX(0.8300);">K</span>
<span class="t" style="left:7.01px;top:186.85px;font-size:15.5px;line-height:15.5px;color:#444;transform:scaleX(0.8800);">1</span>
<span class="t" style="left:7.01px;top:209.91px;font-size:15.5px;line-height:15.5px;color:#444;transform:scaleX(0.8800);">2</span>
<span class="t" style="left:7.01px;top:232.97px;font-size:15.5px;line-height:15.5px;color:#444;transform:scaleX(0.8800);">3</span>
<span class="t" style="left:7.01px;top:256.03px;font-size:15.5px;line-height:15.5px;color:#444;transform:scaleX(0.8800);">4</span>
<span class="t" style="left:7.01px;top:279.09px;font-size:15.5px;line-height:15.5px;color:#444;transform:scaleX(0.8800);">5</span>
<span class="t" style="left:7.01px;top:302.15px;font-size:15.5px;line-height:15.5px;color:#444;transform:scaleX(0.8800);">6</span>
<span class="t" style="left:7.01px;top:325.21px;font-size:15.5px;line-height:15.5px;color:#444;transform:scaleX(0.8800);">7</span>
<span class="t" style="left:7.01px;top:348.27px;font-size:15.5px;line-height:15.5px;color:#444;transform:scaleX(0.8800);">8</span>
<span class="t" style="left:7.01px;top:371.33px;font-size:15.5px;line-height:15.5px;color:#444;transform:scaleX(0.8800);">9</span>
<span class="t" style="left:3.23px;top:394.39px;font-size:15.5px;line-height:15.5px;color:#444;transform:scaleX(0.8800);">10</span>
<span class="t" style="left:3.71px;top:417.45px;font-size:15.5px;line-height:15.5px;color:#444;transform:scaleX(0.8800);">11</span>
<span class="t" style="left:3.23px;top:440.51px;font-size:15.5px;line-height:15.5px;color:#417a5c;transform:scaleX(0.8800);">12</span>
<span class="t" style="left:3.23px;top:463.57px;font-size:15.5px;line-height:15.5px;color:#444;transform:scaleX(0.8800);">13</span>
<span class="t" style="left:3.23px;top:486.63px;font-size:15.5px;line-height:15.5px;color:#444;transform:scaleX(0.8800);">14</span>
<span class="t" style="left:3.23px;top:509.69px;font-size:15.5px;line-height:15.5px;color:#444;transform:scaleX(0.8800);">15</span>
<span class="t" style="left:3.23px;top:532.75px;font-size:15.5px;line-height:15.5px;color:#444;transform:scaleX(0.8800);">16</span>
<span class="t" style="left:3.23px;top:555.81px;font-size:15.5px;line-height:15.5px;color:#444;transform:scaleX(0.8800);">17</span>
<span class="t" style="left:3.23px;top:578.87px;font-size:15.5px;line-height:15.5px;color:#444;transform:scaleX(0.8800);">18</span>
<span class="t" style="left:3.23px;top:601.93px;font-size:15.5px;line-height:15.5px;color:#444;transform:scaleX(0.8800);">19</span>
<span class="t" style="left:3.23px;top:624.99px;font-size:15.5px;line-height:15.5px;color:#444;transform:scaleX(0.8800);">20</span>
<span class="t" style="left:3.23px;top:648.05px;font-size:15.5px;line-height:15.5px;color:#444;transform:scaleX(0.8800);">21</span>
<span class="t" style="left:3.23px;top:671.11px;font-size:15.5px;line-height:15.5px;color:#444;transform:scaleX(0.8800);">22</span>
<span class="t" style="left:26.50px;top:186.90px;font-size:15px;line-height:15px;color:#111;transform:scaleX(0.8850);">Date of Purchase</span>
<span class="t" style="left:196.00px;top:186.90px;font-size:15px;line-height:15px;color:#111;transform:scaleX(0.8850);">(All)</span>
<span class="t b" style="left:26.50px;top:233.02px;font-size:15px;line-height:15px;color:#111;transform:scaleX(0.8125);">Row Labels</span>
<span class="t b" style="left:195.60px;top:233.02px;font-size:15px;line-height:15px;color:#111;transform:scaleX(0.8501);">Sum of Total Price</span>
<span class="t b" style="left:39.90px;top:256.08px;font-size:15px;line-height:15px;color:#111;transform:scaleX(0.8599);">2017</span>
<span class="t b" style="left:250.30px;top:256.08px;font-size:15px;line-height:15px;color:#111;transform:scaleX(0.8884);">2,513,606</span>
<span class="t" style="left:55.00px;top:279.14px;font-size:15px;line-height:15px;color:#111;transform:scaleX(0.8850);">Random Accessories</span>
<span class="t" style="left:276.35px;top:279.14px;font-size:15px;line-height:15px;color:#111;transform:scaleX(0.8850);">4,333</span>
<span class="t" style="left:55.00px;top:302.20px;font-size:15px;line-height:15px;color:#111;transform:scaleX(0.8850);">Lights</span>
<span class="t" style="left:276.35px;top:302.20px;font-size:15px;line-height:15px;color:#111;transform:scaleX(0.8850);">5,074</span>
<span class="t" style="left:55.00px;top:325.26px;font-size:15px;line-height:15px;color:#111;transform:scaleX(0.8850);">Chairs</span>
<span class="t" style="left:261.61px;top:325.26px;font-size:15px;line-height:15px;color:#111;transform:scaleX(0.8850);">149,195</span>
<span class="t" style="left:55.00px;top:348.32px;font-size:15px;line-height:15px;color:#111;transform:scaleX(0.8850);">Tires</span>
<span class="t" style="left:261.61px;top:348.32px;font-size:15px;line-height:15px;color:#111;transform:scaleX(0.8850);">150,851</span>
<span class="t" style="left:55.00px;top:371.38px;font-size:15px;line-height:15px;color:#111;transform:scaleX(0.8850);">Batteries</span>
<span class="t" style="left:261.61px;top:371.38px;font-size:15px;line-height:15px;color:#111;transform:scaleX(0.8850);">618,530</span>
<span class="t" style="left:54.80px;top:394.44px;font-size:15px;line-height:15px;color:#111;transform:scaleX(0.9654);">Minor motors</span>
<span class="t" style="left:250.53px;top:394.44px;font-size:15px;line-height:15px;color:#111;transform:scaleX(0.8850);">1,585,624</span>
<span class="t b" style="left:39.90px;top:417.50px;font-size:15px;line-height:15px;color:#111;transform:scaleX(0.8599);">2018</span>
<span class="t b" style="left:250.30px;top:417.50px;font-size:15px;line-height:15px;color:#111;transform:scaleX(0.8884);">2,914,630</span>
<span class="t" style="left:55.00px;top:440.56px;font-size:15px;line-height:15px;color:#111;transform:scaleX(0.8850);">Random Accessories</span>
<span class="t" style="left:276.35px;top:440.56px;font-size:15px;line-height:15px;color:#111;transform:scaleX(0.8850);">4,629</span>
<span class="t" style="left:55.00px;top:463.62px;font-size:15px;line-height:15px;color:#111;transform:scaleX(0.8850);">Lights</span>
<span class="t" style="left:276.35px;top:463.62px;font-size:15px;line-height:15px;color:#111;transform:scaleX(0.8850);">6,035</span>
<span class="t" style="left:55.00px;top:486.68px;font-size:15px;line-height:15px;color:#111;transform:scaleX(0.8850);">Tires</span>
<span class="t" style="left:261.61px;top:486.68px;font-size:15px;line-height:15px;color:#111;transform:scaleX(0.8850);">144,256</span>
<span class="t" style="left:55.00px;top:509.74px;font-size:15px;line-height:15px;color:#111;transform:scaleX(0.8850);">Chairs</span>
<span class="t" style="left:261.61px;top:509.74px;font-size:15px;line-height:15px;color:#111;transform:scaleX(0.8850);">157,848</span>
<span class="t" style="left:55.00px;top:532.80px;font-size:15px;line-height:15px;color:#111;transform:scaleX(0.8850);">Batteries</span>
<span class="t" style="left:261.61px;top:532.80px;font-size:15px;line-height:15px;color:#111;transform:scaleX(0.8850);">600,563</span>
<span class="t" style="left:54.80px;top:555.86px;font-size:15px;line-height:15px;color:#111;transform:scaleX(0.9654);">Minor motors</span>
<span class="t" style="left:250.53px;top:555.86px;font-size:15px;line-height:15px;color:#111;transform:scaleX(0.8850);">2,001,299</span>
<span class="t b" style="left:26.00px;top:578.92px;font-size:15px;line-height:15px;color:#111;transform:scaleX(0.8817);">Grand Total</span>
<span class="t b" style="left:250.30px;top:578.92px;font-size:15px;line-height:15px;color:#111;transform:scaleX(0.8884);">5,428,235</span>
<div style="left:29.40px;top:258.68px;width:8.20px;height:10.60px;background:#f0f0f0;box-shadow:inset 0 0 0 1px #c2c2c2;"></div>
<div style="left:31.60px;top:263.48px;width:3.80px;height:1.00px;background:#8e8e8e;"></div>
<div style="left:29.40px;top:420.10px;width:8.20px;height:10.60px;background:#f0f0f0;box-shadow:inset 0 0 0 1px #c2c2c2;"></div>
<div style="left:31.60px;top:424.90px;width:3.80px;height:1.00px;background:#8e8e8e;"></div>
<div style="left:299.50px;top:184.70px;width:15.70px;height:19.50px;background:#fbfbfb;box-shadow:inset 0 0 0 1px #c9c9c9;"></div>
<svg style="left:304.60px;top:192.20px;" width="6.4" height="4.2" viewBox="0 0 6.4 4.2"><path d="M0 0 L6.4 0 L3.2 4 Z" fill="#7d7d7d"/></svg>
<div style="left:171.40px;top:230.80px;width:16.10px;height:18.80px;background:#fbfbfb;box-shadow:inset 0 0 0 1px #c9c9c9;"></div>
<svg style="left:173.00px;top:233.00px;" width="14" height="15" viewBox="0 0 14 15"><path d="M1.2 9.6 L6.4 9.6 L3.8 12.8 Z" fill="#777"/><path d="M10 12.6 L10 2.4 M8 4.6 L10 2.2 L12 4.6" stroke="#666" stroke-width="1.1" fill="none"/></svg>
<div style="left:187.60px;top:435.26px;width:129.60px;height:24.26px;box-shadow:inset 0 0 0 2px #27784e;"></div>
<div style="left:314.20px;top:456.22px;width:4.40px;height:4.40px;background:#217346;box-shadow:0 0 0 1px #fff;"></div>
<svg style="left:208.40px;top:333.00px;" width="16" height="18" viewBox="0 0 16 18"><path d="M5.6 1 H10.4 V6.4 H15 V11.4 H10.4 V17 H5.6 V11.4 H1 V6.4 H5.6 Z" fill="#fff" stroke="#111" stroke-width="1.5" stroke-linejoin="round"/></svg>
<div style="left:389.50px;top:204.80px;width:483.20px;height:341.70px;background:radial-gradient(ellipse 62% 70% at 50% 50%,#5b5b5b 0%,#535353 35%,#444444 65%,#333333 90%,#2b2b2b 100%);"></div>
<div style="left:466.00px;top:329.70px;width:334.00px;height:1.60px;background:rgba(150,150,150,0.32);"></div>
<div style="left:466.00px;top:341.65px;width:334.00px;height:1.60px;background:rgba(150,150,150,0.32);"></div>
<div style="left:466.00px;top:353.60px;width:334.00px;height:1.60px;background:rgba(150,150,150,0.32);"></div>
<div style="left:466.00px;top:365.55px;width:334.00px;height:1.60px;background:rgba(150,150,150,0.32);"></div>
<div style="left:466.00px;top:377.50px;width:334.00px;height:1.60px;background:rgba(150,150,150,0.32);"></div>
<div style="left:471.77px;top:390.10px;width:12.20px;height:0.10px;background:linear-gradient(#4d7ddb,#3a68c6);box-shadow:0 0 3px rgba(0,0,0,0.45);"></div>
<div style="left:499.93px;top:390.08px;width:12.20px;height:0.12px;background:linear-gradient(#4d7ddb,#3a68c6);box-shadow:0 0 3px rgba(0,0,0,0.45);"></div>
<div style="left:528.08px;top:386.63px;width:12.20px;height:3.57px;background:linear-gradient(#4d7ddb,#3a68c6);box-shadow:0 0 3px rgba(0,0,0,0.45);"></div>
<div style="left:556.23px;top:386.59px;width:12.20px;height:3.61px;background:linear-gradient(#4d7ddb,#3a68c6);box-shadow:0 0 3px rgba(0,0,0,0.45);"></div>
<div style="left:584.38px;top:375.42px;width:12.20px;height:14.78px;background:linear-gradient(#4d7ddb,#3a68c6);box-shadow:0 0 3px rgba(0,0,0,0.45);"></div>
<div style="left:612.52px;top:352.30px;width:12.20px;height:37.90px;background:linear-gradient(#4d7ddb,#3a68c6);box-shadow:0 0 3px rgba(0,0,0,0.45);"></div>
<div style="left:640.71px;top:390.09px;width:12.20px;height:0.11px;background:linear-gradient(#4d7ddb,#3a68c6);box-shadow:0 0 3px rgba(0,0,0,0.45);"></div>
<div style="left:668.93px;top:390.06px;width:12.20px;height:0.14px;background:linear-gradient(#4d7ddb,#3a68c6);box-shadow:0 0 3px rgba(0,0,0,0.45);"></div>
<div style="left:697.14px;top:386.75px;width:12.20px;height:3.45px;background:linear-gradient(#4d7ddb,#3a68c6);box-shadow:0 0 3px rgba(0,0,0,0.45);"></div>
<div style="left:725.36px;top:386.43px;width:12.20px;height:3.77px;background:linear-gradient(#4d7ddb,#3a68c6);box-shadow:0 0 3px rgba(0,0,0,0.45);"></div>
<div style="left:753.57px;top:375.85px;width:12.20px;height:14.35px;background:linear-gradient(#4d7ddb,#3a68c6);box-shadow:0 0 3px rgba(0,0,0,0.45);"></div>
<div style="left:781.79px;top:342.37px;width:12.20px;height:47.83px;background:linear-gradient(#4d7ddb,#3a68c6);box-shadow:0 0 3px rgba(0,0,0,0.45);"></div>
<div style="left:463.20px;top:389.70px;width:339.40px;height:1.20px;background:#cecece;"></div>
<div style="left:463.20px;top:389.60px;width:1.20px;height:119.60px;background:#cecece;"></div>
<div style="left:632.10px;top:389.60px;width:1.20px;height:119.60px;background:#cecece;"></div>
<div style="left:801.40px;top:389.60px;width:1.20px;height:119.60px;background:#cecece;"></div>
<span class="t" style="left:401.30px;top:324.70px;font-size:12px;line-height:12px;color:#dcdcdc;transform:scaleX(0.9120);">2,500,000</span>
<span class="t" style="left:401.30px;top:336.70px;font-size:12px;line-height:12px;color:#dcdcdc;transform:scaleX(0.9120);">2,000,000</span>
<span class="t" style="left:401.30px;top:348.70px;font-size:12px;line-height:12px;color:#dcdcdc;transform:scaleX(0.9120);">1,500,000</span>
<span class="t" style="left:401.30px;top:360.70px;font-size:12px;line-height:12px;color:#dcdcdc;transform:scaleX(0.9120);">1,000,000</span>
<span class="t" style="left:410.30px;top:372.70px;font-size:12px;line-height:12px;color:#dcdcdc;transform:scaleX(0.9152);">500,000</span>
<div style="left:441.00px;top:390.30px;width:3.80px;height:1.20px;background:#dcdcdc;"></div>
<span class="t b" style="left:606.50px;top:285.40px;font-size:22.6px;line-height:22.6px;color:#fafafa;transform:scaleX(0.9174);">Total</span>
<span class="t" style="left:473.15px;top:446.90px;font-size:12.6px;line-height:12.6px;color:#dcdcdc;transform:rotate(-90deg) scaleX(1.0381);">Random..</span>
<span class="t" style="left:500.65px;top:432.20px;font-size:12.6px;line-height:12.6px;color:#dcdcdc;transform:rotate(-90deg) scaleX(0.9690);">Lights</span>
<span class="t" style="left:528.75px;top:434.60px;font-size:12.6px;line-height:12.6px;color:#dcdcdc;transform:rotate(-90deg) scaleX(0.9612);">Chairs</span>
<span class="t" style="left:557.15px;top:427.00px;font-size:12.6px;line-height:12.6px;color:#dcdcdc;transform:rotate(-90deg) scaleX(0.9952);">Tires</span>
<span class="t" style="left:585.55px;top:450.60px;font-size:12.6px;line-height:12.6px;color:#dcdcdc;transform:rotate(-90deg) scaleX(1.0260);">Batteries</span>
<span class="t" style="left:613.55px;top:479.50px;font-size:12.6px;line-height:12.6px;color:#dcdcdc;transform:rotate(-90deg) scaleX(1.0772);">Minor motors</span>
<span class="t" style="left:641.95px;top:446.90px;font-size:12.6px;line-height:12.6px;color:#dcdcdc;transform:rotate(-90deg) scaleX(1.0381);">Random..</span>
<span class="t" style="left:670.25px;top:432.20px;font-size:12.6px;line-height:12.6px;color:#dcdcdc;transform:rotate(-90deg) scaleX(0.9690);">Lights</span>
<span class="t" style="left:698.15px;top:427.00px;font-size:12.6px;line-height:12.6px;color:#dcdcdc;transform:rotate(-90deg) scaleX(0.9952);">Tires</span>
<span class="t" style="left:726.35px;top:434.60px;font-size:12.6px;line-height:12.6px;color:#dcdcdc;transform:rotate(-90deg) scaleX(0.9612);">Chairs</span>
<span class="t" style="left:754.55px;top:450.60px;font-size:12.6px;line-height:12.6px;color:#dcdcdc;transform:rotate(-90deg) scaleX(1.0260);">Batteries</span>
<span class="t" style="left:782.85px;top:479.50px;font-size:12.6px;line-height:12.6px;color:#dcdcdc;transform:rotate(-90deg) scaleX(1.0772);">Minor motors</span>
<span class="t" style="left:536.40px;top:492.00px;font-size:13px;line-height:13px;color:#dcdcdc;transform:scaleX(0.7986);">2017</span>
<span class="t" style="left:705.00px;top:492.00px;font-size:13px;line-height:13px;color:#dcdcdc;transform:scaleX(0.8401);">2018</span>
<div style="left:823.00px;top:411.00px;width:7.20px;height:9.40px;background:#4673d1;"></div>
<span class="t" style="left:832.50px;top:409.15px;font-size:13.5px;line-height:13.5px;color:#dcdcdc;transform:scaleX(0.8706);">Total</span>
<div style="left:394.80px;top:214.30px;width:103.40px;height:21.90px;background:linear-gradient(#ececec,#d9d9d9 45%,#c4c4c4);box-shadow:inset 0 0 0 1px #a8a8a8;"></div>
<span class="t" style="left:397.90px;top:218.75px;font-size:14.5px;line-height:14.5px;color:#222;transform:scaleX(0.7151);">Date of Purchase</span>
<svg style="left:486.80px;top:224.40px;" width="6" height="4" viewBox="0 0 6 4"><path d="M0 0 L6 0 L3 3.6 Z" fill="#333"/></svg>
<div style="left:400.00px;top:245.40px;width:95.80px;height:21.30px;background:linear-gradient(#ececec,#d9d9d9 45%,#c4c4c4);box-shadow:inset 0 0 0 1px #a8a8a8;"></div>
<span class="t" style="left:403.00px;top:250.35px;font-size:13.5px;line-height:13.5px;color:#222;transform:scaleX(0.7934);">Sum of Total Price</span>
<div style="left:400.00px;top:516.50px;width:48.00px;height:21.50px;background:linear-gradient(#ececec,#d9d9d9 45%,#c4c4c4);box-shadow:inset 0 0 0 1px #a8a8a8;"></div>
<span class="t" style="left:403.50px;top:521.05px;font-size:14.5px;line-height:14.5px;color:#222;transform:scaleX(0.6979);">Years</span>
<svg style="left:436.60px;top:526.20px;" width="6" height="4" viewBox="0 0 6 4"><path d="M0 0 L6 0 L3 3.6 Z" fill="#333"/></svg>
<div style="left:448.40px;top:516.50px;width:65.60px;height:21.50px;background:linear-gradient(#ececec,#d9d9d9 45%,#c4c4c4);box-shadow:inset 0 0 0 1px #a8a8a8;"></div>
<span class="t" style="left:451.40px;top:521.05px;font-size:14.5px;line-height:14.5px;color:#222;transform:scaleX(0.7100);">Category</span>
<svg style="left:502.00px;top:526.20px;" width="6" height="4" viewBox="0 0 6 4"><path d="M0 0 L6 0 L3 3.6 Z" fill="#333"/></svg>
<div style="left:830.00px;top:516.50px;width:15.60px;height:21.50px;background:linear-gradient(#e4e4e4,#cdcdcd);box-shadow:inset 0 0 0 1px #b5b5b5;"></div>
<div style="left:846.00px;top:516.50px;width:15.60px;height:21.50px;background:linear-gradient(#e4e4e4,#cdcdcd);box-shadow:inset 0 0 0 1px #b5b5b5;"></div>
<svg style="left:833.50px;top:522.50px;" width="9" height="9" viewBox="0 0 9 9"><path d="M4.5 0.5 V8.5 M0.5 4.5 H8.5" stroke="#8a8a8a" stroke-width="1.6"/></svg>
<svg style="left:849.50px;top:522.50px;" width="9" height="9" viewBox="0 0 9 9"><path d="M0.8 4.5 H8.2" stroke="#8a8a8a" stroke-width="1.6"/></svg>
<div style="left:913.50px;top:160.00px;width:21.50px;height:542.00px;background:#e6e6e6;"></div>
<div style="left:915.60px;top:160.50px;width:15.80px;height:514.90px;background:#d6d6d6;"></div>
<div style="left:915.60px;top:180.00px;width:15.80px;height:452.50px;background:#fff;box-shadow:inset 0 0 0 1px #d0d0d0;"></div>
<div style="left:915.60px;top:160.50px;width:15.80px;height:19.30px;background:#fff;box-shadow:inset 0 0 0 1px #c8c8c8;"></div>
<div style="left:915.60px;top:656.40px;width:15.80px;height:19.00px;background:#fff;box-shadow:inset 0 0 0 1px #c8c8c8;"></div>
<svg style="left:919.80px;top:167.60px;" width="8" height="5" viewBox="0 0 8 5"><path d="M0 4.6 L4 0 L8 4.6 Z" fill="#777"/></svg>
<svg style="left:919.60px;top:663.80px;" width="8" height="5" viewBox="0 0 8 5"><path d="M0 0 L8 0 L4 4.6 Z" fill="#666"/></svg>
<span class="t" style="left:946.30px;top:173.65px;font-size:24.7px;line-height:24.7px;color:#2f7a56;transform:scaleX(0.8086);">PivotTable Fields</span>
<svg style="left:1219.50px;top:182.00px;" width="10" height="6" viewBox="0 0 10 6"><path d="M0 0 L10 0 L5 5.8 Z" fill="#6e6e6e"/></svg>
<svg style="left:1260.30px;top:179.40px;" width="10" height="10.4" viewBox="0 0 10 10.4"><path d="M1 1 L9 9.4 M9 1 L1 9.4" stroke="#555" stroke-width="2.3"/></svg>
<span class="t" style="left:948.50px;top:220.50px;font-size:15px;line-height:15px;color:#515151;transform:scaleX(0.8187);">Choose fields to add to report:</span>
<div style="left:1232.30px;top:211.00px;width:42.30px;height:30.70px;background:#fbfbfb;box-shadow:inset 0 0 0 1px #d2d2d2;"></div>
<svg style="left:1240.50px;top:217.50px;" width="17" height="17" viewBox="0 0 17 17"><g fill="none" stroke="#555" stroke-width="1.25"><circle cx="8.5" cy="8.5" r="2.9"/><path d="M7.1 1 h2.8 l0.5 2.1 l1.4 0.8 l2.0 -0.7 l1.4 2.4 l-1.5 1.5 v1.8 l1.5 1.5 l-1.4 2.4 l-2.0 -0.7 l-1.4 0.8 l-0.5 2.1 h-2.8 l-0.5 -2.1 l-1.4 -0.8 l-2.0 0.7 l-1.4 -2.4 l1.5 -1.5 v-1.8 l-1.5 -1.5 l1.4 -2.4 l2.0 0.7 l1.4 -0.8 z"/></g></svg>
<svg style="left:1264.30px;top:223.60px;" width="8" height="5" viewBox="0 0 8 5"><path d="M0 0 L8 0 L4 4.6 Z" fill="#666"/></svg>
<div style="left:947.00px;top:258.40px;width:328.00px;height:22.90px;background:#fff;box-shadow:inset 0 0 0 1px #bdbdbd;"></div>
<span class="t" style="left:949.00px;top:263.75px;font-size:14.5px;line-height:14.5px;color:#7a7a7a;transform:scaleX(0.7506);">Search</span>
<svg style="left:1258.00px;top:260.50px;" width="17" height="19" viewBox="0 0 17 19"><circle cx="10.6" cy="6.6" r="5.2" fill="none" stroke="#555" stroke-width="1.4"/><path d="M7 10.6 L1.2 17.4" stroke="#555" stroke-width="1.6"/></svg>
<div style="left:947.00px;top:302.00px;width:328.00px;height:104.00px;background:#fcfcfc;"></div>
<div style="left:1258.00px;top:302.00px;width:17.00px;height:104.00px;background:#e4e4e4;"></div>
<div style="left:1258.00px;top:303.40px;width:16.80px;height:18.40px;background:#fdfdfd;box-shadow:inset 0 0 0 1px #d0d0d0;"></div>
<div style="left:1258.00px;top:322.30px;width:16.80px;height:20.30px;background:#fdfdfd;box-shadow:inset 0 0 0 1px #d0d0d0;"></div>
<div style="left:1258.00px;top:385.00px;width:16.80px;height:19.60px;background:#fdfdfd;box-shadow:inset 0 0 0 1px #d0d0d0;"></div>
<svg style="left:1262.00px;top:310.00px;" width="9" height="6" viewBox="0 0 9 6"><path d="M0 5.4 L4.5 0 L9 5.4 Z" fill="#666"/></svg>
<svg style="left:1262.00px;top:392.60px;" width="9" height="6" viewBox="0 0 9 6"><path d="M0 0 L9 0 L4.5 5.4 Z" fill="#555"/></svg>
<div style="left:949.00px;top:303.50px;width:13.60px;height:14.80px;background:#fff;box-shadow:inset 0 0 0 1px #8c8c8c;"></div>
<div style="left:949.00px;top:327.90px;width:13.60px;height:14.80px;background:#fff;box-shadow:inset 0 0 0 1px #8c8c8c;"></div>
<div style="left:949.00px;top:352.50px;width:13.60px;height:14.80px;background:#fff;box-shadow:inset 0 0 0 1px #8c8c8c;"></div>
<div style="left:949.00px;top:376.90px;width:13.60px;height:14.80px;background:#fff;box-shadow:inset 0 0 0 1px #8c8c8c;"></div>
<div style="left:949.00px;top:401.60px;width:13.60px;height:4.40px;background:#fff;border:1px solid #8c8c8c;border-bottom:none;box-sizing:border-box;"></div>
<svg style="left:950.50px;top:379.00px;" width="11" height="11" viewBox="0 0 11 11"><path d="M1.6 5.8 L4.4 8.8 L9.4 1.6" fill="none" stroke="#555" stroke-width="1.4"/></svg>
<span class="t" style="left:967.90px;top:305.55px;font-size:14.5px;line-height:14.5px;color:#515151;transform:scaleX(0.8359);">OrderNum</span>
<span class="t" style="left:967.90px;top:330.15px;font-size:14.5px;line-height:14.5px;color:#515151;transform:scaleX(0.7925);">CustFullName</span>
<span class="t" style="left:968.00px;top:354.95px;font-size:14.5px;line-height:14.5px;color:#515151;transform:scaleX(0.7768);">State</span>
<span class="t b" style="left:968.00px;top:379.55px;font-size:14.5px;line-height:14.5px;color:#333;transform:scaleX(0.8188);">Date of Purchase</span>
<span class="t" style="left:951.70px;top:432.60px;font-size:15px;line-height:15px;color:#515151;transform:scaleX(0.7850);">Drag fields between areas below:</span>
<svg style="left:953.90px;top:471.70px;" width="13" height="14.5" viewBox="0 0 13 14.5"><path d="M0 0 H13 V1.6 L8.2 7 V14 L4.8 12.2 V7 L0 1.6 Z" fill="#8a8a8a"/></svg>
<span class="t" style="left:973.30px;top:474.35px;font-size:14.5px;line-height:14.5px;color:#515151;transform:scaleX(0.7708);">Filters</span>
<svg style="left:1120.00px;top:472.50px;" width="10" height="13" viewBox="0 0 10 13"><path d="M0.9 0 V13" stroke="#8a8a8a" stroke-width="1.8"/><path d="M3.8 0 V13 M6.3 0 V13 M8.8 0 V13" stroke="#a6a6a6" stroke-width="1.1"/></svg>
<span class="t" style="left:1137.70px;top:474.35px;font-size:14.5px;line-height:14.5px;color:#515151;transform:scaleX(0.8146);">Columns</span>
<div style="left:1112.40px;top:470.00px;width:1.20px;height:170.30px;background:#cfcfcf;"></div>
<div style="left:950.60px;top:554.30px;width:155.60px;height:1.20px;background:#cfcfcf;"></div>
<div style="left:1115.00px;top:554.30px;width:160.00px;height:1.20px;background:#cfcfcf;"></div>
<div style="left:950.60px;top:496.00px;width:155.60px;height:51.20px;background:#fcfcfc;"></div>
<div style="left:951.00px;top:497.40px;width:153.80px;height:26.90px;background:#fdfdfd;box-shadow:inset 0 0 0 1px #d4d4d4;"></div>
<span class="t" style="left:959.30px;top:505.35px;font-size:14.5px;line-height:14.5px;color:#515151;transform:scaleX(0.8008);">Date of Purchase</span>
<svg style="left:1086.60px;top:508.40px;" width="8.4" height="5" viewBox="0 0 8.4 5"><path d="M0 0 L8.4 0 L4.2 4.8 Z" fill="#555"/></svg>
<div style="left:1115.00px;top:495.00px;width:160.00px;height:52.20px;background:#fcfcfc;"></div>
<svg style="left:954.40px;top:566.00px;" width="12" height="12" viewBox="0 0 12 12"><path d="M0 1 H12 M0 4.2 H12" stroke="#8a8a8a" stroke-width="1.6"/><path d="M0 7.4 H12 M0 10.4 H12" stroke="#adadad" stroke-width="1.2"/></svg>
<span class="t" style="left:973.30px;top:567.35px;font-size:14.5px;line-height:14.5px;color:#515151;transform:scaleX(0.7807);">Rows</span>
<span class="t s" style="left:1120.40px;top:564.00px;font-size:17px;line-height:17px;color:#777;transform:scaleX(0.9331);">Σ</span>
<span class="t" style="left:1137.70px;top:567.35px;font-size:14.5px;line-height:14.5px;color:#515151;transform:scaleX(0.7855);">Values</span>
<div style="left:950.60px;top:590.00px;width:136.70px;height:50.30px;background:#fcfcfc;"></div>
<div style="left:951.00px;top:591.00px;width:136.00px;height:26.40px;background:#fdfdfd;box-shadow:inset 0 0 0 1px #d4d4d4;"></div>
<span class="t" style="left:959.30px;top:598.35px;font-size:14.5px;line-height:14.5px;color:#515151;transform:scaleX(0.7526);">Years</span>
<svg style="left:1069.20px;top:601.60px;" width="8.4" height="5" viewBox="0 0 8.4 5"><path d="M0 0 L8.4 0 L4.2 4.8 Z" fill="#555"/></svg>
<div style="left:951px;top:621px;width:136px;height:19.3px;overflow:hidden;background:#fdfdfd;box-shadow:inset 0 1px 0 #d4d4d4,inset 1px 0 0 #d4d4d4,inset -1px 0 0 #d4d4d4;">
<span class="t" style="left:8.30px;top:8.15px;font-size:14.5px;line-height:14.5px;color:#515151;transform:scaleX(0.8137);">Category</span>
</div>
<svg style="left:1069.20px;top:632.00px;" width="8.4" height="5" viewBox="0 0 8.4 5"><path d="M0 0 L8.4 0 L4.2 4.8 Z" fill="#555"/></svg>
<div style="left:1088.00px;top:590.00px;width:16.80px;height:50.30px;background:#e2e2e2;"></div>
<div style="left:1088.00px;top:590.00px;width:16.80px;height:18.00px;background:#fdfdfd;box-shadow:inset 0 0 0 1px #cdcdcd;"></div>
<div style="left:1088.00px;top:609.30px;width:16.80px;height:9.40px;background:#fdfdfd;box-shadow:inset 0 0 0 1px #cdcdcd;"></div>
<div style="left:1088.00px;top:620.60px;width:16.80px;height:18.60px;background:#fdfdfd;box-shadow:inset 0 0 0 1px #cdcdcd;"></div>
<svg style="left:1092.00px;top:596.40px;" width="9" height="6" viewBox="0 0 9 6"><path d="M0 5.4 L4.5 0 L9 5.4 Z" fill="#666"/></svg>
<svg style="left:1092.00px;top:627.60px;" width="9" height="6" viewBox="0 0 9 6"><path d="M0 0 L9 0 L4.5 5.4 Z" fill="#555"/></svg>
<div style="left:1115.00px;top:590.00px;width:160.00px;height:50.30px;background:#fcfcfc;"></div>
<div style="left:1115.60px;top:591.00px;width:158.40px;height:26.40px;background:#fdfdfd;box-shadow:inset 0 0 0 1px #d4d4d4;"></div>
<span class="t" style="left:1123.70px;top:598.35px;font-size:14.5px;line-height:14.5px;color:#515151;transform:scaleX(0.8221);">Sum of Total Price</span>
<svg style="left:1256.20px;top:601.60px;" width="8.4" height="5" viewBox="0 0 8.4 5"><path d="M0 0 L8.4 0 L4.2 4.8 Z" fill="#555"/></svg>
<div style="left:950.60px;top:670.50px;width:13.20px;height:15.10px;background:#fff;box-shadow:inset 0 0 0 1px #8c8c8c;"></div>
<span class="t" style="left:970.60px;top:672.55px;font-size:14.5px;line-height:14.5px;color:#515151;transform:scaleX(0.8152);">Defer Layout Update</span>
<div style="left:1227.50px;top:664.60px;width:47.10px;height:26.90px;background:#f5f5f5;"></div>
<span class="t" style="left:1232.30px;top:672.55px;font-size:14.5px;line-height:14.5px;color:#c2c2c2;transform:scaleX(0.8190);">Update</span>
<div style="left:0.00px;top:675.00px;width:935.00px;height:27.00px;background:#e6e6e6;"></div>
<div style="left:0.00px;top:674.60px;width:913.50px;height:1.20px;background:#b9b9b9;"></div>
<svg style="left:16.00px;top:683.50px;" width="6" height="9" viewBox="0 0 6 9"><path d="M5.5 0 L0.5 4.5 L5.5 9 Z" fill="#c4c4c4"/></svg>
<svg style="left:39.50px;top:683.50px;" width="6" height="9" viewBox="0 0 6 9"><path d="M0.5 0 L5.5 4.5 L0.5 9 Z" fill="#c4c4c4"/></svg>
<div style="left:76.80px;top:675.40px;width:60.00px;height:23.50px;background:#fff;"></div>
<div style="left:76.80px;top:696.90px;width:60.00px;height:2.10px;background:#217346;"></div>
<div style="left:76.30px;top:675.40px;width:1.00px;height:23.50px;background:#c9c9c9;"></div>
<div style="left:136.30px;top:675.40px;width:1.00px;height:23.50px;background:#c9c9c9;"></div>
<span class="t b" style="left:85.00px;top:679.00px;font-size:16px;line-height:16px;color:#217346;transform:scaleX(0.8098);">Sheet1</span>
<span class="t" style="left:146.30px;top:679.00px;font-size:16px;line-height:16px;color:#4f4f4f;transform:scaleX(0.7729);">Sheet2</span>
<div style="left:195.00px;top:677.50px;width:1.20px;height:22.00px;background:#c2c2c2;"></div>
<svg style="left:221.50px;top:679.50px;" width="16" height="16" viewBox="0 0 16 16"><circle cx="8" cy="8" r="7" fill="none" stroke="#6b6b6b" stroke-width="1.1"/><path d="M8 4.2 V11.8 M4.2 8 H11.8" stroke="#6b6b6b" stroke-width="1.2"/></svg>
<div style="left:557.00px;top:682.10px;width:1.80px;height:1.80px;background:#b2b2b2;"></div>
<div style="left:557.00px;top:686.50px;width:1.80px;height:1.80px;background:#b2b2b2;"></div>
<div style="left:557.00px;top:690.90px;width:1.80px;height:1.80px;background:#b2b2b2;"></div>
<div style="left:570.50px;top:677.80px;width:343.80px;height:19.60px;background:#d6d6d6;"></div>
<div style="left:570.50px;top:677.80px;width:15.80px;height:19.60px;background:#fff;box-shadow:inset 0 0 0 1px #c8c8c8;"></div>
<div style="left:587.00px;top:677.80px;width:286.00px;height:19.60px;background:#fff;box-shadow:inset 0 0 0 1px #c8c8c8;"></div>
<div style="left:898.00px;top:677.80px;width:16.30px;height:19.60px;background:#fff;box-shadow:inset 0 0 0 1px #c8c8c8;"></div>
<svg style="left:575.80px;top:683.60px;" width="5" height="8" viewBox="0 0 5 8"><path d="M4.8 0 L0.3 4 L4.8 8 Z" fill="#666"/></svg>
<svg style="left:904.00px;top:683.60px;" width="5" height="8" viewBox="0 0 5 8"><path d="M0.2 0 L4.7 4 L0.2 8 Z" fill="#666"/></svg>
<div style="left:933.20px;top:150.00px;width:1.00px;height:552.00px;background:#d9d9d9;"></div>
<div style="left:0.00px;top:701.80px;width:1280.00px;height:18.20px;background:#f1f1f1;"></div>
<div style="left:988.00px;top:701.80px;width:40.00px;height:18.20px;background:#c9c9c9;"></div>
<svg style="left:1001.00px;top:707.00px;" width="14" height="14" viewBox="0 0 14 14"><path d="M0.7 0.7 H13.3 V14 M0.7 0.7 V14 M0.7 5 H13.3 M0.7 9.4 H13.3 M5 0.7 V14 M9.2 0.7 V14" fill="none" stroke="#4a4a4a" stroke-width="1.4"/></svg>
<svg style="left:1041.50px;top:707.00px;" width="14" height="14" viewBox="0 0 14 14"><path d="M0.7 14 V0.7 H13.3 V14" fill="none" stroke="#4a4a4a" stroke-width="1.4"/><path d="M3.6 14 V3.8 H10.4 V14 M5.4 6.4 H8.6 M5.4 8.8 H8.6 M5.4 11.2 H8.6" fill="none" stroke="#4a4a4a" stroke-width="1.1"/></svg>
<svg style="left:1081.40px;top:707.00px;" width="15" height="14" viewBox="0 0 15 14"><path d="M0.7 14 V0.7 H14.3 V14" fill="none" stroke="#4a4a4a" stroke-width="1.4"/><path d="M5.2 0.7 V8 H10.6 V0.7" fill="none" stroke="#4a4a4a" stroke-width="1.3"/></svg>
<div style="left:1114.00px;top:713.80px;width:7.50px;height:1.40px;background:#666;"></div>
<div style="left:1127.70px;top:714.20px;width:98.90px;height:1.10px;background:#8f8f8f;"></div>
<div style="left:1175.00px;top:707.70px;width:4.80px;height:12.30px;background:#666;"></div>
<svg style="left:1232.30px;top:710.40px;" width="9" height="9" viewBox="0 0 9 9"><path d="M4.5 0.3 V8.7 M0.3 4.5 H8.7" stroke="#666" stroke-width="1.3"/></svg>
<span class="t" style="left:1253.00px;top:709.35px;font-size:14.5px;line-height:14.5px;color:#444;transform:scaleX(0.8082);">100%</span>
</div></body></html>
